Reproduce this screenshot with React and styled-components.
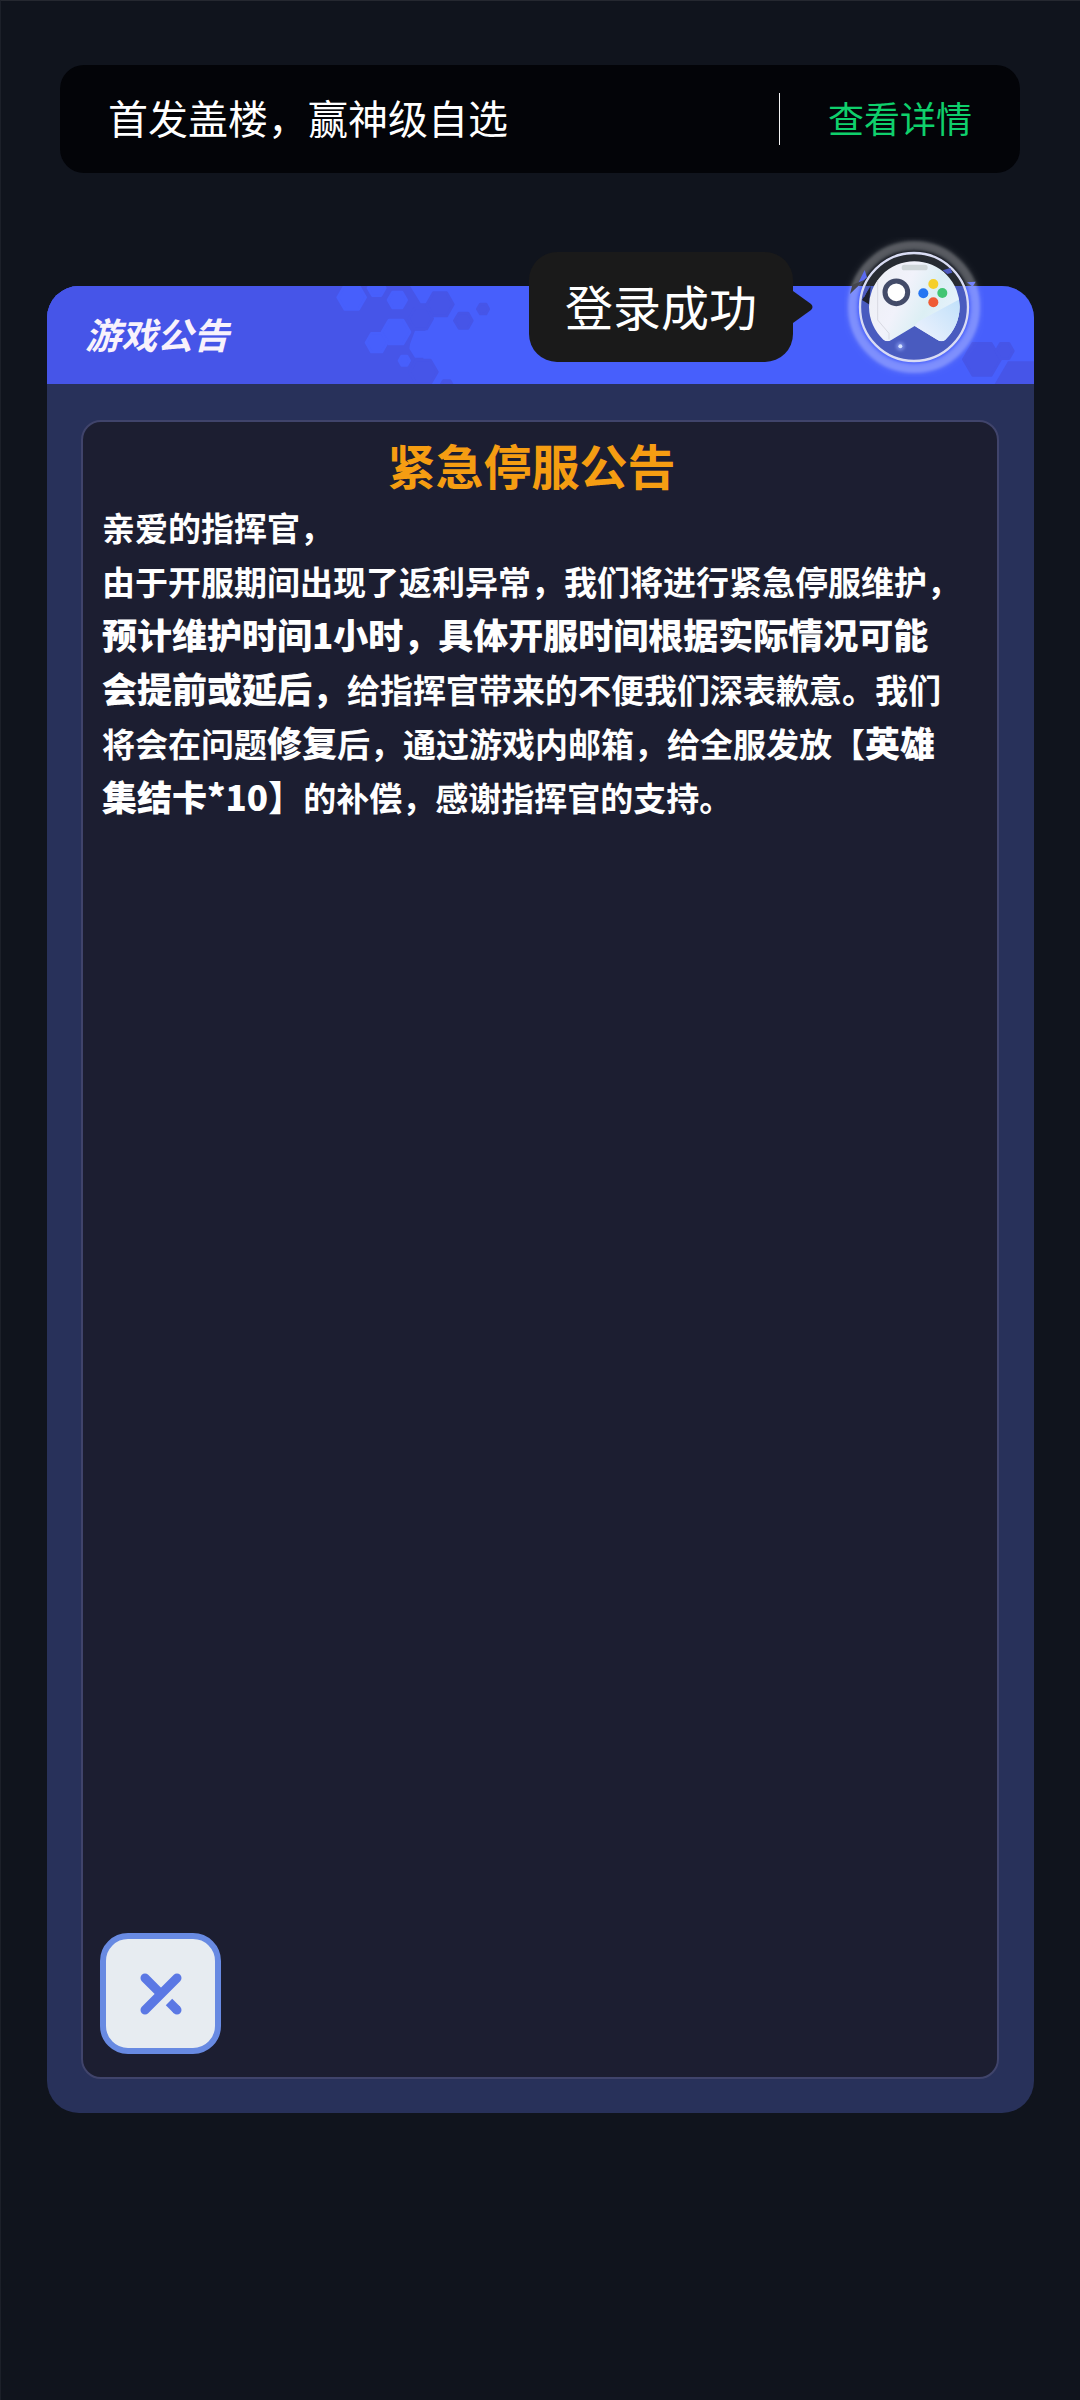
import React from "react";
import styled, { createGlobalStyle } from "styled-components";

const GlobalStyle = createGlobalStyle`
  * {
    box-sizing: border-box;
  }

  body {
    margin: 0;
    background: #10141d;
    font-family: "Noto Sans CJK SC", sans-serif;
  }
`;

const Page = styled.div`
  position: relative;
  display: flex;
  flex-direction: column;
  min-height: 100vh;
  padding: 64px 46px 287px 46px;
  border-top: 1px solid #252830;
  border-left: 1px solid #1c2029;
  color: #fff;
`;

const Banner = styled.section`
  display: flex;
  align-items: center;
  gap: 48px;
  height: 108px;
  margin: 0 14px 113px 13px;
  padding: 0 48px;
  border-radius: 24px;
  background: #030408;
`;

const BannerText = styled.p`
  flex: 1;
  margin: 0;
  padding-bottom: 4px;
  font-size: 40px;
  line-height: 52px;
`;

const Divider = styled.span`
  width: 1px;
  height: 52px;
  background: #f4f4f4;
`;

const DetailLink = styled.a`
  padding-bottom: 4px;
  color: #0fd06c;
  font-size: 36px;
  line-height: 52px;
  text-decoration: none;
`;

const Panel = styled.main`
  display: flex;
  flex: 1;
  flex-direction: column;
  overflow: hidden;
  border-radius: 32px;
  background: #28315a;
`;

const PanelHeader = styled.header`
  position: relative;
  display: flex;
  align-items: center;
  height: 98px;
  padding: 0 38px;
  background: #475ffc;
`;

const Pattern = styled.svg`
  position: absolute;
  top: 0;
  ${(props) => (props.$side === "left" ? "left: 0;" : "right: 0;")}
`;

const PanelTitle = styled.h1`
  position: relative;
  margin: 0;
  padding-bottom: 4px;
  color: #f8f2fc;
  font-size: 36px;
  font-style: italic;
  font-weight: 700;
  line-height: 52px;
`;

const Board = styled.div`
  display: flex;
  flex: 1;
  flex-direction: column;
  margin: 36px 35px 34px 34px;
  border: 2px solid #40446b;
  border-radius: 20px;
  background: #1c1e31;
`;

const Notice = styled.article`
  flex: 1;
  padding: 12px 36px 0 19px;
`;

const NoticeTitle = styled.h2`
  margin: 0 0 6px;
  color: #f59d12;
  font-size: 48px;
  font-weight: 700;
  line-height: 60px;
  text-align: center;
`;

const NoticeText = styled.p`
  margin: 0;
  font-size: 33px;
  font-weight: 700;
  line-height: 54px;
`;

const Strong = styled.strong`
  font-size: 35px;
  line-height: 1;
`;

const CloseButton = styled.button`
  display: flex;
  align-items: center;
  justify-content: center;
  width: 121px;
  height: 121px;
  margin: 0 0 23px 17px;
  padding: 0;
  border: 6px solid #688ae2;
  border-radius: 28px;
  background: #e7ecf1;
  cursor: pointer;
`;

/* 悬浮球和提示气泡，浮在公告面板上方 */
const Floating = styled.aside`
  position: absolute;
  top: 236px;
  right: 96px;
  display: flex;
  align-items: center;
  gap: 51px;
`;

const Bubble = styled.div`
  position: relative;
  height: 110px;
  padding: 0 36px;
  border-radius: 28px;
  background: #1a1a1a;
  font-size: 48px;
  line-height: 106px;
`;

const BubbleArrow = styled.svg`
  position: absolute;
  top: 39px;
  left: 100%;
`;

const BallButton = styled.button`
  width: 140px;
  height: 140px;
  padding: 0;
  border: 0;
  background: none;
  cursor: pointer;

  svg {
    display: block;
  }
`;

const DARK = "#4655e8";
const LIGHT = "#475ffc";

function Hex({ x, y, r, fill }) {
  const points = [0, 60, 120, 180, 240, 300]
    .map((deg) => {
      const a = (deg * Math.PI) / 180;
      return `${Math.round(x + r * Math.cos(a))},${Math.round(y + r * Math.sin(a))}`;
    })
    .join(" ");
  return <polygon points={points} fill={fill} stroke={fill} strokeWidth="8" strokeLinejoin="round" />;
}

function HeaderPattern() {
  return (
    <>
      <Pattern $side="left" width="493" height="98" viewBox="-759 48 1479 294" aria-hidden="true">
        <path
          d="M-759 48 H330 L345 72 L362 100 H400 L392 150 L376 182 H345 L330 222 L328 236 L345 263 H370 V342 H-759 Z"
          fill={DARK}
        />
        <Hex x={420} y={103} r={40} fill={DARK} />
        <Hex x={362} y={146} r={36} fill={DARK} />
        <Hex x={370} y={306} r={42} fill={DARK} />
        <Hex x={440} y={349} r={20} fill={DARK} />
        <Hex x={490} y={152} r={27} fill={DARK} />
        <Hex x={549} y={117} r={17} fill={DARK} />
        <Hex x={155} y={82} r={42} fill={LIGHT} />
        <Hex x={230} y={54} r={26} fill={LIGHT} />
        <Hex x={292} y={90} r={28} fill={LIGHT} />
        <Hex x={288} y={186} r={42} fill={LIGHT} />
        <Hex x={230} y={218} r={32} fill={LIGHT} />
        <Hex x={313} y={272} r={16} fill={LIGHT} />
      </Pattern>
      <Pattern $side="right" width="80" height="98" viewBox="400 198 240 294" aria-hidden="true">
        <Hex x={484} y={418} r={56} fill={DARK} />
        <Hex x={552} y={393} r={26} fill={DARK} />
        <path d="M522 492 L562 424 H640 V492 Z" fill={DARK} />
      </Pattern>
    </>
  );
}

function GamepadIcon() {
  return (
    <svg width="140" height="140" viewBox="73 51 420 420" aria-hidden="true">
      <defs>
        <linearGradient id="face" x1="0" y1="0" x2="1" y2="0.5">
          <stop offset="0" stopColor="#eceef2" />
          <stop offset="0.45" stopColor="#f1f2fb" />
          <stop offset="0.7" stopColor="#dceff4" />
          <stop offset="1" stopColor="#e8f2fe" />
        </linearGradient>
        <linearGradient id="shine" x1="0" y1="1" x2="1" y2="0">
          <stop offset="0" stopColor="#f3f4fd" />
          <stop offset="1" stopColor="#bfe0fa" />
        </linearGradient>
        <clipPath id="faceClip">
          <path d="M215 360 Q203 368 191 359 A136 136 0 1 1 377 359 Q366 368 354 360 L285 318 Z" />
        </clipPath>
        <filter id="soft" x="-20%" y="-20%" width="140%" height="140%">
          <feGaussianBlur stdDeviation="5" />
        </filter>
        <filter id="halo" x="-20%" y="-20%" width="140%" height="140%">
          <feGaussianBlur stdDeviation="9" />
        </filter>
      </defs>
      <circle cx="283" cy="261" r="188" fill="none" stroke="#fff" strokeOpacity="0.1" strokeWidth="24" filter="url(#halo)" />
      <circle cx="283" cy="261" r="184" fill="none" stroke="#fff" strokeOpacity="0.24" strokeWidth="28" filter="url(#soft)" />
      <circle cx="283" cy="261" r="164" fill="#4f5457" fillOpacity="0.37" />
      <path d="M135 150 L142 172 L108 205 Z" fill="#5a6af0" />
      <path d="M91 222 L98 194 L134 180 Z" fill="#45464f" />
      <path d="M127 240 L153 198 L148 253 Z" fill="#1d202d" />
      <path d="M124 216 L150 196 L134 232 Z" fill="#4c5ac0" />
      <path d="M442 187 L468 185 L459 200 Z" fill="#7382fb" />
      <circle cx="283" cy="261" r="162" fill="none" stroke="#d9dcf4" strokeWidth="7" />
      <path d="M369 151 L392 144 L398 158 L383 162 Z" fill="#4c5ac0" />
      <g clipPath="url(#faceClip)">
        <rect x="140" y="115" width="290" height="290" fill="url(#face)" />
        <path d="M295 305 L425 235 V380 H360 L285 318 Z" fill="url(#shine)" />
        <path d="M174 180 V300 L208 340 V358" fill="none" stroke="#d8d9e2" strokeWidth="3" />
        <rect x="246" y="134" width="78" height="17" rx="8" fill="#cfd6d9" />
      </g>
      <circle cx="230" cy="217" r="34" fill="#fff" stroke="#434b69" strokeWidth="15" />
      <circle cx="341" cy="192" r="15" fill="#f5cf2b" />
      <circle cx="311" cy="220" r="15" fill="#2575f2" />
      <circle cx="368" cy="219" r="15" fill="#41c573" />
      <circle cx="341" cy="247" r="15" fill="#ef5b35" />
      <circle cx="242" cy="379" r="13" fill="#8fa4f5" fillOpacity="0.6" filter="url(#soft)" />
      <circle cx="242" cy="379" r="6" fill="#d5e2ff" />
    </svg>
  );
}

function CloseIcon() {
  return (
    <svg width="42" height="42" viewBox="0 0 126 126" aria-hidden="true">
      <g fill="none" stroke="#5b78e4" strokeWidth="27">
        <path d="M15 15 L62 62" strokeLinecap="round" />
        <path d="M111 15 L15 111" strokeLinecap="round" />
        <path d="M111 111 L110 110" strokeLinecap="round" />
        <path d="M87 87 L111 111" />
      </g>
    </svg>
  );
}

function App() {
  return (
    <>
      <GlobalStyle />
      <Page>
        <Banner>
          <BannerText>首发盖楼，赢神级自选</BannerText>
          <Divider />
          <DetailLink href="#detail">查看详情</DetailLink>
        </Banner>

        <Panel>
          <PanelHeader>
            <HeaderPattern />
            <PanelTitle>游戏公告</PanelTitle>
          </PanelHeader>
          <Board>
            <Notice>
              <NoticeTitle>紧急停服公告</NoticeTitle>
              <NoticeText>亲爱的指挥官，</NoticeText>
              <NoticeText>
                由于开服期间出现了返利异常，我们将进行紧急停服维护，
                <Strong>预计维护时间1小时，具体开服时间根据实际情况可能会提前或延后，</Strong>
                给指挥官带来的不便我们深表歉意。我们将会在问题
                <Strong>修复</Strong>
                后，通过游戏内邮箱，给全服发放【
                <Strong>英雄集结卡*10】</Strong>
                的补偿，感谢指挥官的支持。
              </NoticeText>
            </Notice>
            <CloseButton type="button" aria-label="关闭">
              <CloseIcon />
            </CloseButton>
          </Board>
        </Panel>

        <Floating>
          <Bubble role="status">
            登录成功
            <BubbleArrow width="20" height="32" viewBox="0 0 20 32" aria-hidden="true">
              <path d="M0 0 L18 13 Q21 16 18 19 L0 32 Z" fill="#1a1a1a" />
            </BubbleArrow>
          </Bubble>
          <BallButton type="button" aria-label="游戏助手">
            <GamepadIcon />
          </BallButton>
        </Floating>
      </Page>
    </>
  );
}

export default App;
